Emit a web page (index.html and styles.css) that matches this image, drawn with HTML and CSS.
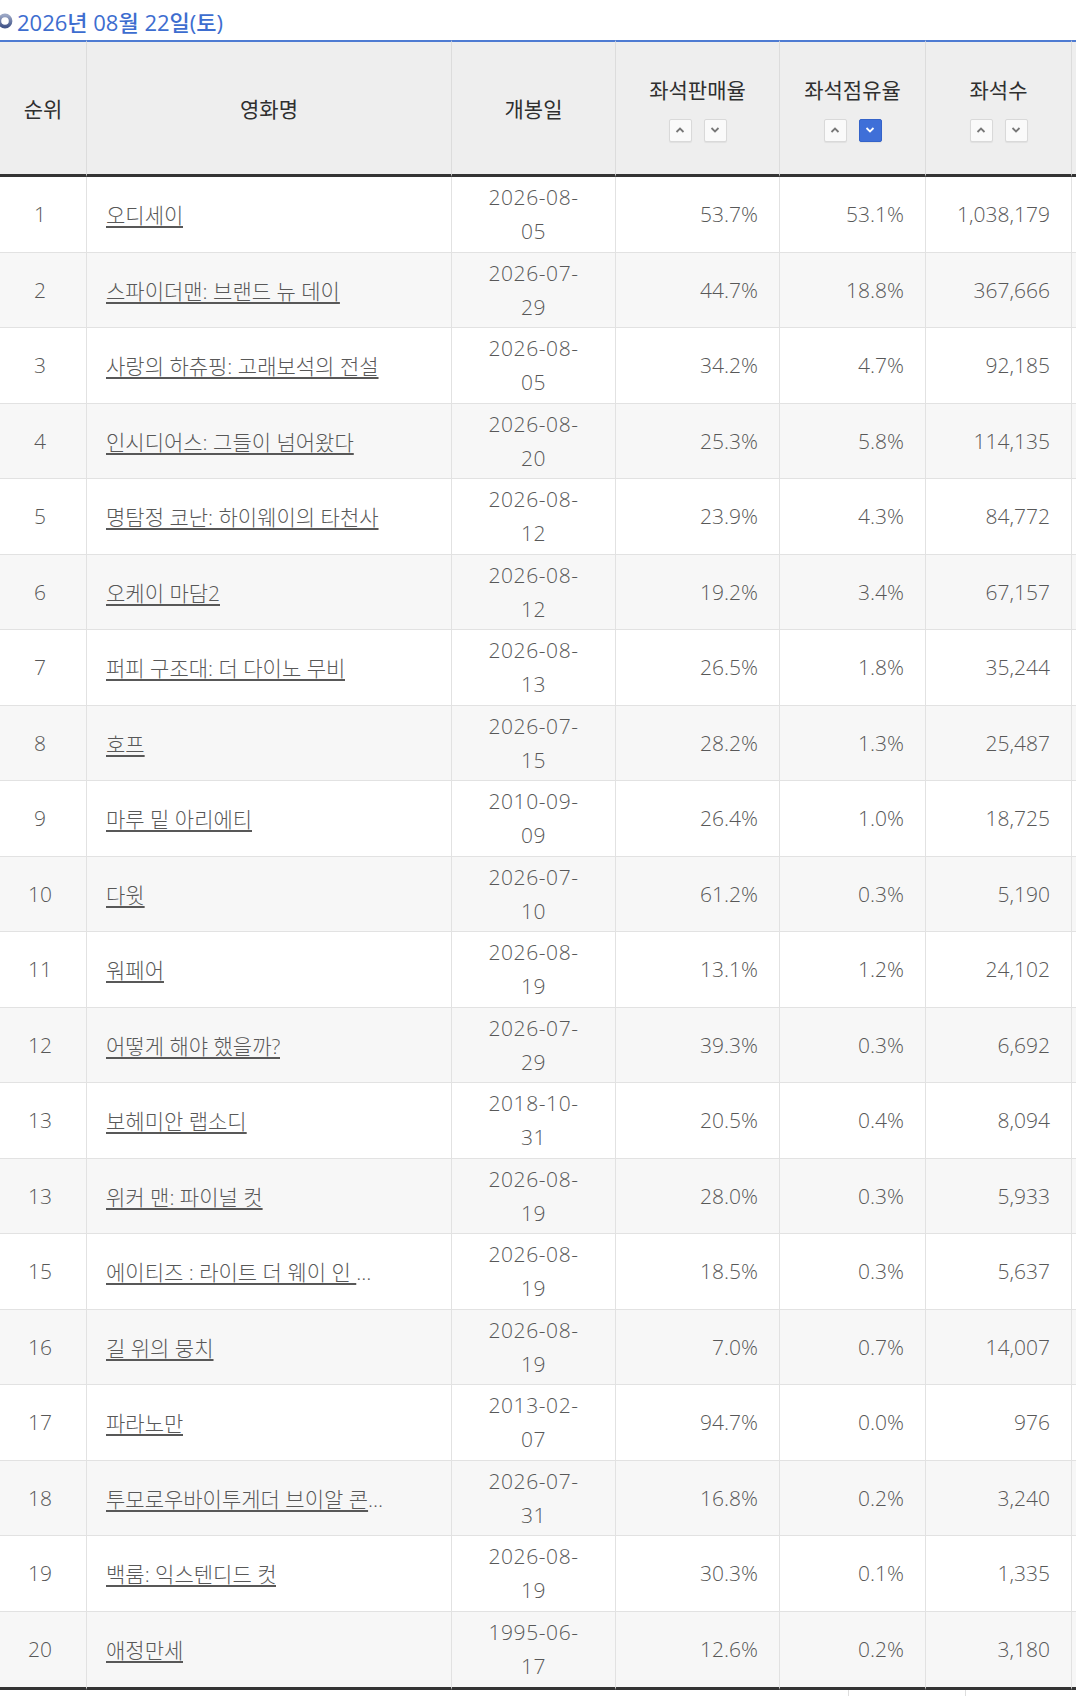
FILE: index.html
```html
<!DOCTYPE html>
<html lang="ko">
<head>
<meta charset="utf-8">
<title>좌석판매율</title>
<link rel="stylesheet" href="styles.css">
</head>
<body>
<div class="page">
  <h2 class="day">
    <svg class="day-icon" width="16" height="16" viewBox="0 0 16 16" aria-hidden="true">
      <defs>
        <linearGradient id="ring" x1="0" y1="0" x2="0" y2="1">
          <stop offset="0" stop-color="#9aa6c4"/>
          <stop offset="1" stop-color="#44568a"/>
        </linearGradient>
      </defs>
      <circle cx="8" cy="8" r="5.6" fill="#fff" stroke="url(#ring)" stroke-width="3.6"/>
    </svg>
    <span>2026년 08월 22일(토)</span>
  </h2>

  <table class="board">
    <colgroup>
      <col class="c-rank"><col class="c-title"><col class="c-date"><col class="c-rate"><col class="c-share"><col class="c-seat"><col class="c-more">
    </colgroup>
    <thead>
      <tr>
        <th>순위</th>
        <th>영화명</th>
        <th>개봉일</th>
        <th>
          <div class="label">좌석판매율</div>
          <div class="sort">
            <span class="btn"><svg width="10" height="6" viewBox="0 0 10 6"><path d="M1.5 5 L5 1.6 L8.5 5" fill="none" stroke="#777" stroke-width="1.8"/></svg></span>
            <span class="btn"><svg width="10" height="6" viewBox="0 0 10 6"><path d="M1.5 1 L5 4.4 L8.5 1" fill="none" stroke="#777" stroke-width="1.8"/></svg></span>
          </div>
        </th>
        <th>
          <div class="label">좌석점유율</div>
          <div class="sort">
            <span class="btn"><svg width="10" height="6" viewBox="0 0 10 6"><path d="M1.5 5 L5 1.6 L8.5 5" fill="none" stroke="#777" stroke-width="1.8"/></svg></span>
            <span class="btn on"><svg width="10" height="6" viewBox="0 0 10 6"><path d="M1.5 1 L5 4.4 L8.5 1" fill="none" stroke="#fff" stroke-width="1.8"/></svg></span>
          </div>
        </th>
        <th>
          <div class="label">좌석수</div>
          <div class="sort">
            <span class="btn"><svg width="10" height="6" viewBox="0 0 10 6"><path d="M1.5 5 L5 1.6 L8.5 5" fill="none" stroke="#777" stroke-width="1.8"/></svg></span>
            <span class="btn"><svg width="10" height="6" viewBox="0 0 10 6"><path d="M1.5 1 L5 4.4 L8.5 1" fill="none" stroke="#777" stroke-width="1.8"/></svg></span>
          </div>
        </th>
        <th></th>
      </tr>
    </thead>
    <tbody>
      <tr><td class="rank">1</td><td class="name"><a href="#">오디세이</a></td><td class="date">2026-08-<br>05</td><td class="num">53.7%</td><td class="num">53.1%</td><td class="num">1,038,179</td><td></td></tr>
      <tr><td class="rank">2</td><td class="name"><a href="#">스파이더맨: 브랜드 뉴 데이</a></td><td class="date">2026-07-<br>29</td><td class="num">44.7%</td><td class="num">18.8%</td><td class="num">367,666</td><td></td></tr>
      <tr><td class="rank">3</td><td class="name"><a href="#">사랑의 하츄핑: 고래보석의 전설</a></td><td class="date">2026-08-<br>05</td><td class="num">34.2%</td><td class="num">4.7%</td><td class="num">92,185</td><td></td></tr>
      <tr><td class="rank">4</td><td class="name"><a href="#">인시디어스: 그들이 넘어왔다</a></td><td class="date">2026-08-<br>20</td><td class="num">25.3%</td><td class="num">5.8%</td><td class="num">114,135</td><td></td></tr>
      <tr><td class="rank">5</td><td class="name"><a href="#">명탐정 코난: 하이웨이의 타천사</a></td><td class="date">2026-08-<br>12</td><td class="num">23.9%</td><td class="num">4.3%</td><td class="num">84,772</td><td></td></tr>
      <tr><td class="rank">6</td><td class="name"><a href="#">오케이 마담2</a></td><td class="date">2026-08-<br>12</td><td class="num">19.2%</td><td class="num">3.4%</td><td class="num">67,157</td><td></td></tr>
      <tr><td class="rank">7</td><td class="name"><a href="#">퍼피 구조대: 더 다이노 무비</a></td><td class="date">2026-08-<br>13</td><td class="num">26.5%</td><td class="num">1.8%</td><td class="num">35,244</td><td></td></tr>
      <tr><td class="rank">8</td><td class="name"><a href="#">호프</a></td><td class="date">2026-07-<br>15</td><td class="num">28.2%</td><td class="num">1.3%</td><td class="num">25,487</td><td></td></tr>
      <tr><td class="rank">9</td><td class="name"><a href="#">마루 밑 아리에티</a></td><td class="date">2010-09-<br>09</td><td class="num">26.4%</td><td class="num">1.0%</td><td class="num">18,725</td><td></td></tr>
      <tr><td class="rank">10</td><td class="name"><a href="#">다윗</a></td><td class="date">2026-07-<br>10</td><td class="num">61.2%</td><td class="num">0.3%</td><td class="num">5,190</td><td></td></tr>
      <tr><td class="rank">11</td><td class="name"><a href="#">워페어</a></td><td class="date">2026-08-<br>19</td><td class="num">13.1%</td><td class="num">1.2%</td><td class="num">24,102</td><td></td></tr>
      <tr><td class="rank">12</td><td class="name"><a href="#">어떻게 해야 했을까?</a></td><td class="date">2026-07-<br>29</td><td class="num">39.3%</td><td class="num">0.3%</td><td class="num">6,692</td><td></td></tr>
      <tr><td class="rank">13</td><td class="name"><a href="#">보헤미안 랩소디</a></td><td class="date">2018-10-<br>31</td><td class="num">20.5%</td><td class="num">0.4%</td><td class="num">8,094</td><td></td></tr>
      <tr><td class="rank">13</td><td class="name"><a href="#">위커 맨: 파이널 컷</a></td><td class="date">2026-08-<br>19</td><td class="num">28.0%</td><td class="num">0.3%</td><td class="num">5,933</td><td></td></tr>
      <tr><td class="rank">15</td><td class="name"><a href="#">에이티즈 : 라이트 더 웨이 인 시네마</a></td><td class="date">2026-08-<br>19</td><td class="num">18.5%</td><td class="num">0.3%</td><td class="num">5,637</td><td></td></tr>
      <tr><td class="rank">16</td><td class="name"><a href="#">길 위의 뭉치</a></td><td class="date">2026-08-<br>19</td><td class="num">7.0%</td><td class="num">0.7%</td><td class="num">14,007</td><td></td></tr>
      <tr><td class="rank">17</td><td class="name"><a href="#">파라노만</a></td><td class="date">2013-02-<br>07</td><td class="num">94.7%</td><td class="num">0.0%</td><td class="num">976</td><td></td></tr>
      <tr><td class="rank">18</td><td class="name"><a href="#">투모로우바이투게더 브이알 콘서트</a></td><td class="date">2026-07-<br>31</td><td class="num">16.8%</td><td class="num">0.2%</td><td class="num">3,240</td><td></td></tr>
      <tr><td class="rank">19</td><td class="name"><a href="#">백룸: 익스텐디드 컷</a></td><td class="date">2026-08-<br>19</td><td class="num">30.3%</td><td class="num">0.1%</td><td class="num">1,335</td><td></td></tr>
      <tr><td class="rank">20</td><td class="name"><a href="#">애정만세</a></td><td class="date">1995-06-<br>17</td><td class="num">12.6%</td><td class="num">0.2%</td><td class="num">3,180</td><td></td></tr>
    </tbody>
  </table>

  <div class="next">
    <span class="next-a"></span>
    <span class="next-b"></span>
  </div>
</div>
</body>
</html>
```

FILE: styles.css
```css
* {
  box-sizing: border-box;
}

html, body {
  margin: 0;
  padding: 0;
  background: #fff;
}

body {
  font-family: "Open Sans", "Noto Sans CJK KR", sans-serif;
  color: #5c5c5c;
}

.page {
  width: 1076px;
  overflow: hidden;
}

.day {
  margin: 0;
  height: 40px;
  display: flex;
  align-items: center;
  gap: 4px;
  color: #3d6dcf;
  font-size: 22px;
  font-weight: 500;
  padding-top: 2px;
}

.day-icon {
  margin-left: -3px;
  flex: none;
}

.board {
  border-collapse: separate;
  border-spacing: 0;
  table-layout: fixed;
  width: 1172px;
}

.c-rank { width: 87px; }
.c-title { width: 365px; }
.c-date { width: 164px; }
.c-rate { width: 164px; }
.c-share { width: 146px; }
.c-seat { width: 146px; }
.c-more { width: 100px; }

.board th {
  height: 137px;
  padding: 0;
  background: #eeeeee;
  border-top: 2px solid #4e7bd2;
  border-bottom: 3px solid #343434;
  border-right: 1px solid #dcdcdc;
  color: #2f2f2f;
  font-size: 21px;
  font-weight: 400;
  text-align: center;
  vertical-align: middle;
}

.label {
  line-height: 30px;
}

.sort {
  display: flex;
  justify-content: center;
  gap: 12px;
  margin-top: 14px;
}

.btn {
  width: 23px;
  height: 23px;
  display: flex;
  align-items: center;
  justify-content: center;
  background: #fafafa;
  border: 1px solid #d9d9d9;
  border-radius: 2px;
  box-shadow: 0 1px 1px rgba(0, 0, 0, 0.06);
}

.btn.on {
  background: #3f6fd8;
  border-color: #3463c9;
}

.board td {
  height: 75.5px;
  padding: 0 21px 0 19px;
  border-bottom: 1px solid #e2e2e2;
  border-right: 1px solid #e2e2e2;
  font-size: 21px;
  font-weight: 300;
  line-height: 34px;
  color: #585858;
  vertical-align: middle;
  white-space: nowrap;
}

.board tbody tr:nth-child(even) td {
  background: #f7f7f7;
}

.board tbody tr:last-child td {
  height: 78.5px;
  border-bottom: 3px solid #343434;
}

.board td.rank {
  text-align: center;
  padding: 0 6px 0 0;
}

.board td.date {
  text-align: center;
  padding: 0;
  letter-spacing: 0.6px;
}

.board td.num {
  text-align: right;
}

.name a {
  display: inline-block;
  max-width: 284px;
  overflow: hidden;
  text-overflow: ellipsis;
  white-space: nowrap;
  vertical-align: middle;
  color: #585858;
  text-decoration: underline;
  text-underline-offset: 3px;
}

.next {
  display: flex;
  height: 20px;
}

.next-a {
  width: 849px;
  border-right: 1px solid #dddddd;
}

.next-b {
  width: 117px;
  border-right: 1px solid #dddddd;
}
```
